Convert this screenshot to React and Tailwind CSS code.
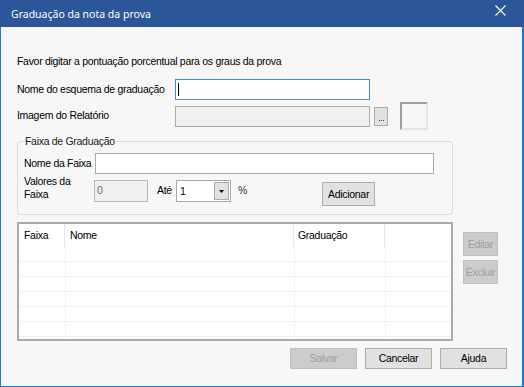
import React from "react";

const Btn = ({ children, disabled, className = "" }) => (
    <button
        className={`flex items-center justify-center border leading-none whitespace-nowrap ${
            disabled
                ? "bg-[#cccccc] border-[#bfbfbf] text-[#9f9f9f]"
                : "bg-[#e1e1e1] border-[#adadad] text-black"
        } ${className}`}>
        {children}
    </button>
)

const rows = [0, 1, 2, 3, 4, 5, 6]

export default function App() {
    return (
        <div className="w-[524px] h-[387px] flex flex-col font-['Liberation_Sans',Arial,sans-serif] text-[10.5px] tracking-[-0.3px] text-black">
            {/* title bar */}
            <div className="h-[27px] shrink-0 bg-[#2b579a] flex justify-between pl-[11px] pr-[18px]">
                <span className="self-center mt-[3px] font-['Noto_Sans',sans-serif] text-[10.5px] tracking-normal text-white">
                    Graduação da nota da prova
                </span>
                <svg
                    className="mt-[5px]"
                    width="11"
                    height="11"
                    viewBox="0 0 11 11"
                    fill="none"
                    stroke="#ffffff"
                    strokeWidth="1.1">
                    <path d="M0.5 0.5 L10.5 10.5 M10.5 0.5 L0.5 10.5"/>
                </svg>
            </div>

            <div className="flex-1 bg-[#f7f7f7] border-l border-r-2 border-b border-[#1b78d2] flex flex-col pl-[16px] pr-[15px]">
                <p className="mt-[28px] leading-[13px] whitespace-nowrap">
                    Favor digitar a pontuação porcentual para os graus da prova
                </p>

                <div className="mt-[11px] flex items-center h-[21px]">
                    <span className="w-[158px] whitespace-nowrap">Nome do esquema de graduação</span>
                    <div className="w-[195px] h-[21px] bg-white border border-[#3d8ee0] flex items-center pl-[2px]">
                        <span className="w-px h-[13px] bg-black"/>
                    </div>
                </div>

                <div className="mt-[2px] flex items-center h-[28px]">
                    <span className="w-[158px] whitespace-nowrap">Imagem do Relatório</span>
                    <div className="w-[195px] h-[21px] bg-[#f0f0f0] border border-[#acacac]"/>
                    <button className="ml-[4px] w-[14px] h-[19px] bg-[#e1e1e1] border border-[#adadad] flex items-end justify-center pb-[4px]">
                        <span className="flex gap-[1px]">
                            <span className="w-px h-px bg-[#444444]"/>
                            <span className="w-px h-px bg-[#444444]"/>
                            <span className="w-px h-px bg-[#444444]"/>
                        </span>
                    </button>
                    <div className="ml-[12px] w-[28px] h-[28px] border-2 border-t-[#a0a0a0] border-l-[#a0a0a0] border-r-[#e3e3e3] border-b-[#e3e3e3] bg-[#f7f7f7]"/>
                </div>

                <fieldset className="mt-[5px] w-[436px] border border-[#dcdcdc] rounded-[4px] px-[6px] pb-[8px]">
                    <legend className="px-[1px] leading-[13px] text-[#1a1a1a]">Faixa de Graduação</legend>

                    <div className="mt-[5px] flex items-center">
                        <span className="w-[71px] whitespace-nowrap">Nome da Faixa</span>
                        <div className="w-[339px] h-[21px] bg-white border border-[#ababab]"/>
                    </div>

                    <div className="mt-[1px] flex items-start">
                        <span className="w-[70px] leading-[13px]">Valores da<br/>Faixa</span>
                        <div className="mt-[5px] h-[22px] flex items-center">
                            <div className="w-[54px] h-[22px] bg-[#f0f0f0] border border-[#b9b9b9] flex items-center pl-[2px] text-[#6d6d6d]">
                                0
                            </div>
                            <span className="ml-[9px] w-[19px]">Até</span>
                            <div className="w-[55px] h-[22px] bg-white border border-[#a9a9a9] flex items-start">
                                <span className="pl-[3px] mt-[3px]">1</span>
                                <div className="ml-auto mt-[1px] mr-[1px] w-[15px] h-[18px] bg-[#e1e1e1] border border-[#acacac] flex items-center justify-center">
                                    <svg width="5" height="3" viewBox="0 0 5 3">
                                        <path d="M0 0 H5 L2.5 3 Z" fill="#000000"/>
                                    </svg>
                                </div>
                            </div>
                            <span className="ml-[7px] text-[#333333]">%</span>
                        </div>
                        <Btn className="ml-[75px] mt-[7px] w-[53px] h-[24px]">Adicionar</Btn>
                    </div>
                </fieldset>

                <div className="mt-[7px] flex items-start">
                    <div className="w-[436px] h-[119px] border-2 border-[#aaaaaa] bg-white flex flex-col overflow-hidden">
                        <div className="h-[23px] shrink-0 flex">
                            <div className="w-[46px] border-r border-[#e5e5e5] flex items-center pl-[5px]">Faixa</div>
                            <div className="w-[229px] border-r border-[#e5e5e5] flex items-center pl-[5px]">Nome</div>
                            <div className="w-[91px] border-r border-[#e5e5e5] flex items-center pl-[4px]">Graduação</div>
                            <div className="flex-1"/>
                        </div>
                        {rows.map(r => (
                            <div
                                key={r}
                                className="h-[15px] shrink-0 flex border-b border-[#f0f0f0]">
                                <div className="w-[47px] border-r border-[#f0f0f0]"/>
                                <div className="w-[229px] border-r border-[#f0f0f0]"/>
                                <div className="w-[91px] border-r border-[#f0f0f0]"/>
                                <div className="flex-1"/>
                            </div>
                        ))}
                    </div>
                    <div className="ml-[10px] mt-[10px] flex flex-col gap-[4px]">
                        <Btn disabled className="w-[35px] h-[24px]">Editar</Btn>
                        <Btn disabled className="w-[35px] h-[24px]">Excluir</Btn>
                    </div>
                </div>

                <div className="mt-[7px] flex justify-end gap-[8px]">
                    <Btn disabled className="w-[67px] h-[21px]">Salvar</Btn>
                    <Btn className="w-[67px] h-[21px]">Cancelar</Btn>
                    <Btn className="w-[67px] h-[21px]">Ajuda</Btn>
                </div>
            </div>
        </div>
    )
}
